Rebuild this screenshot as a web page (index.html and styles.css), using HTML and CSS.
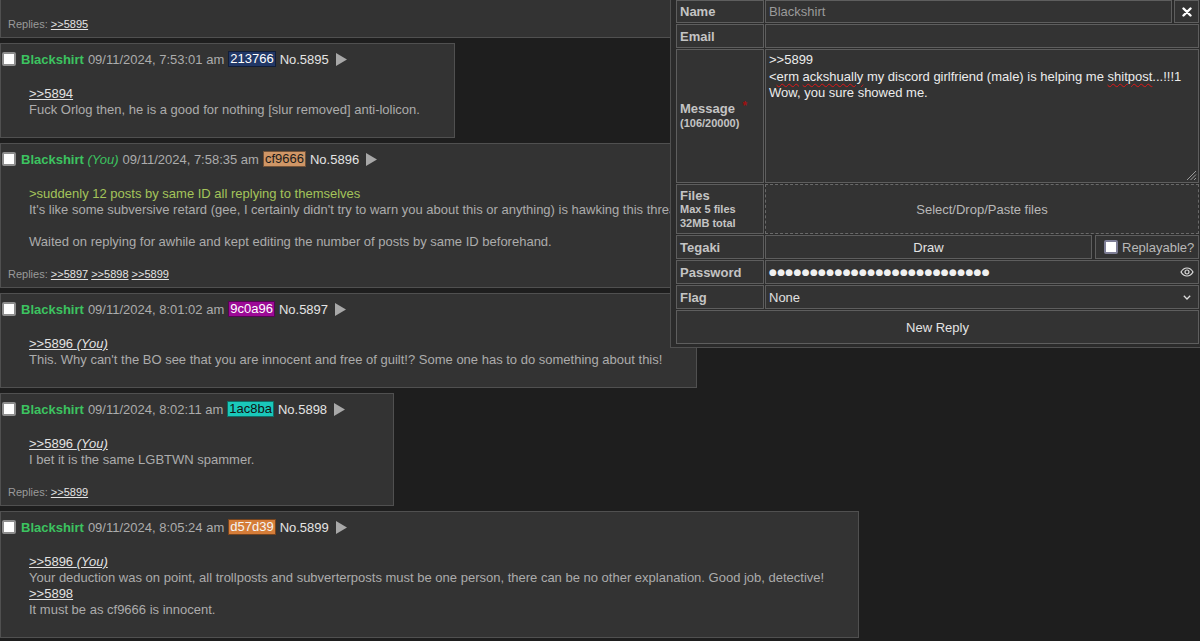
FILE: index.html
```html
<!DOCTYPE html>
<html lang="en">
<head>
<meta charset="utf-8">
<title>Thread</title>
<link rel="stylesheet" href="styles.css">
</head>
<body>
<main class="thread">

  <article class="post post-cut">
    <div class="replies">Replies: <a href="#p5895">&gt;&gt;5895</a></div>
  </article>

  <article class="post" id="p5895">
    <div class="post-head">
      <span class="check"></span>
      <span class="name">Blackshirt</span>
      <span class="date">09/11/2024, 7:53:01 am</span>
      <span class="uid uid-213766">213766</span>
      <span class="no">No.5895</span>
      <svg class="arrow" viewBox="0 0 12 14"><path d="M0 0 L12 7 L0 14 Z"/></svg>
    </div>
    <div class="post-body">
      <p><a class="quote" href="#">&gt;&gt;5894</a></p>
      <p>Fuck Orlog then, he is a good for nothing [slur removed] anti-lolicon.</p>
    </div>
  </article>

  <article class="post">
    <div class="post-head">
      <span class="check"></span>
      <span class="name">Blackshirt <em class="you">(You)</em></span>
      <span class="date">09/11/2024, 7:58:35 am</span>
      <span class="uid uid-cf9666">cf9666</span>
      <span class="no">No.5896</span>
      <svg class="arrow" viewBox="0 0 12 14"><path d="M0 0 L12 7 L0 14 Z"/></svg>
    </div>
    <div class="post-body">
      <p class="green">&gt;suddenly 12 posts by same ID all replying to themselves</p>
      <p>It's like some subversive retard (gee, I certainly didn't try to warn you about this or anything) is hawking this thread.</p>
      <p>&nbsp;</p>
      <p>Waited on replying for awhile and kept editing the number of posts by same ID beforehand.</p>
    </div>
    <div class="replies">Replies: <a href="#">&gt;&gt;5897</a> <a href="#">&gt;&gt;5898</a> <a href="#">&gt;&gt;5899</a></div>
  </article>

  <article class="post">
    <div class="post-head">
      <span class="check"></span>
      <span class="name">Blackshirt</span>
      <span class="date">09/11/2024, 8:01:02 am</span>
      <span class="uid uid-9c0a96">9c0a96</span>
      <span class="no">No.5897</span>
      <svg class="arrow" viewBox="0 0 12 14"><path d="M0 0 L12 7 L0 14 Z"/></svg>
    </div>
    <div class="post-body">
      <p><a class="quote" href="#">&gt;&gt;5896 <em>(You)</em></a></p>
      <p>This. Why can't the BO see that you are innocent and free of guilt!? Some one has to do something about this!</p>
    </div>
  </article>

  <article class="post">
    <div class="post-head">
      <span class="check"></span>
      <span class="name">Blackshirt</span>
      <span class="date">09/11/2024, 8:02:11 am</span>
      <span class="uid uid-1ac8ba">1ac8ba</span>
      <span class="no">No.5898</span>
      <svg class="arrow" viewBox="0 0 12 14"><path d="M0 0 L12 7 L0 14 Z"/></svg>
    </div>
    <div class="post-body">
      <p><a class="quote" href="#">&gt;&gt;5896 <em>(You)</em></a></p>
      <p>I bet it is the same LGBTWN spammer.</p>
    </div>
    <div class="replies">Replies: <a href="#">&gt;&gt;5899</a></div>
  </article>

  <article class="post">
    <div class="post-head">
      <span class="check"></span>
      <span class="name">Blackshirt</span>
      <span class="date">09/11/2024, 8:05:24 am</span>
      <span class="uid uid-d57d39">d57d39</span>
      <span class="no">No.5899</span>
      <svg class="arrow" viewBox="0 0 12 14"><path d="M0 0 L12 7 L0 14 Z"/></svg>
    </div>
    <div class="post-body">
      <p><a class="quote" href="#">&gt;&gt;5896 <em>(You)</em></a></p>
      <p>Your deduction was on point, all trollposts and subverterposts must be one person, there can be no other explanation. Good job, detective!</p>
      <p><a class="quote" href="#">&gt;&gt;5898</a></p>
      <p>It must be as cf9666 is innocent.</p>
    </div>
  </article>

</main>

<form class="reply-form">
  <div class="lbl">Name</div>
  <div class="cell-split">
    <div class="field field-grow muted">Blackshirt</div>
    <div class="field close-btn">
      <svg viewBox="0 0 10 10" width="10" height="10"><path d="M1.5 1.5 L8.5 8.5 M8.5 1.5 L1.5 8.5" stroke="#fff" stroke-width="2.4" stroke-linecap="round"/></svg>
    </div>
  </div>

  <div class="lbl">Email</div>
  <div class="field"></div>

  <div class="lbl lbl-stack">
    <span class="lbl-main">Message <sup class="req">*</sup></span>
    <span class="lbl-small">(106/20000)</span>
  </div>
  <div class="field textarea">
    <p>&gt;&gt;5899</p>
    <p>&lt;<span class="typo">erm</span> <span class="typo">ackshually</span> my discord girlfriend (male) is helping me <span class="typo">shitpost</span>...!!!1</p>
    <p>Wow, you sure showed me.</p>
    <svg class="grip" viewBox="0 0 12 12" width="12" height="12"><path d="M11 2 L2 11 M11 5.5 L5.5 11 M11 9 L9 11" stroke="#9a9a9a" stroke-width="1"/></svg>
  </div>

  <div class="lbl lbl-stack">
    <span class="lbl-main lbl-tight">Files</span>
    <span class="lbl-small">Max 5 files</span>
    <span class="lbl-small">32MB total</span>
  </div>
  <div class="dropzone">Select/Drop/Paste files</div>

  <div class="lbl">Tegaki</div>
  <div class="cell-split cell-split-wide">
    <div class="field field-grow btn">Draw</div>
    <div class="field replay">
      <span class="check check-form"></span>
      <span>Replayable?</span>
    </div>
  </div>

  <div class="lbl">Password</div>
  <div class="field password">
    <span class="dots">●●●●●●●●●●●●●●●●●●●●●●●●●●●</span>
    <svg class="eye" viewBox="0 0 14 10" width="14" height="10"><path d="M1 5 C3 1.5 5 1 7 1 C9 1 11 1.5 13 5 C11 8.5 9 9 7 9 C5 9 3 8.5 1 5 Z" fill="none" stroke="#ddd" stroke-width="1.2"/><circle cx="7" cy="5" r="2" fill="none" stroke="#ddd" stroke-width="1.2"/></svg>
  </div>

  <div class="lbl">Flag</div>
  <div class="field select">
    <span>None</span>
    <svg class="chev" viewBox="0 0 8 5" width="8" height="5"><path d="M0.8 0.8 L4 4 L7.2 0.8" fill="none" stroke="#ddd" stroke-width="1.3"/></svg>
  </div>

  <div class="field btn submit">New Reply</div>
</form>
</body>
</html>
```
FILE: styles.css
```css
html, body {
  margin: 0;
  padding: 0;
  background: #1e1e1e;
  font-family: "Liberation Sans", Arial, sans-serif;
  font-size: 13px;
  color: #acacac;
  overflow: hidden;
  height: 641px;
}

p { margin: 0; }
a { color: #dcdcdc; }

.thread {
  display: flex;
  flex-direction: column;
  align-items: flex-start;
  gap: 5px;
}

.post {
  background: #333;
  border: 1px solid #505050;
  padding-bottom: 2px;
  white-space: nowrap;
}

.post-cut {
  border-top: 0;
  padding-top: 17px;
  min-width: 720px;
  box-sizing: border-box;
}

.post-head {
  display: flex;
  align-items: center;
  gap: 4px;
  height: 20px;
  margin-top: 5px;
  padding-right: 48px;
}

.check {
  display: inline-block;
  width: 14px;
  height: 14px;
  box-sizing: border-box;
  border: 2px solid #8d8d8d;
  border-radius: 2px;
  background: #fff;
  margin-left: 1px;
  margin-right: 1px;
}

.name {
  color: #3cc360;
  font-weight: bold;
}

.you {
  font-weight: normal;
  font-style: italic;
}

.date { color: #acacac; }

.uid {
  display: inline-block;
  line-height: 14px;
  padding: 0 1px;
  border: 1px solid rgba(0, 0, 0, 0.45);
  color: #fff;
}
.uid-213766 { background: #213766; }
.uid-cf9666 { background: #cf9666; color: #1a1a1a; }
.uid-9c0a96 { background: #9c0a96; }
.uid-1ac8ba { background: #1ac8ba; color: #111; }
.uid-d57d39 { background: #d57d39; color: #f4f4f4; }

.no { color: #e4e4e4; }

.arrow {
  width: 11px;
  height: 13px;
  fill: #a8a8a8;
  margin-left: 3px;
}

.post-body {
  margin: 17px 34px 17px 28px;
  line-height: 16px;
}

.quote { color: #e2e2e2; }
.quote em { font-style: italic; }

.green { color: #a4c45a; }

.replies {
  font-size: 11px;
  line-height: 14px;
  padding: 0 0 4px 7px;
  color: #9a9a9a;
}
.replies a { color: #e4e4e4; }

/* reply form */
.reply-form {
  position: fixed;
  top: 0;
  right: 0;
  width: 530px;
  box-sizing: border-box;
  margin: 0;
  background: #2b2b2b;
  border-left: 1px solid #505050;
  border-bottom: 1px solid #505050;
  padding: 0 1px 3px 5px;
  display: grid;
  grid-template-columns: 88px 1fr;
  grid-template-rows: 23px 24px 134px 50px 24px 24px 24px 34px;
  column-gap: 1px;
  row-gap: 1px;
}

.lbl {
  background: #333;
  border: 1px solid #5e5e5e;
  color: #c4c4c4;
  font-weight: bold;
  padding-left: 3px;
  display: flex;
  align-items: center;
}

.lbl-stack {
  flex-direction: column;
  align-items: flex-start;
  justify-content: center;
}
.lbl-main { line-height: 16px; }
.lbl-tight { line-height: 15px; }
.lbl-small {
  font-size: 11px;
  line-height: 13.5px;
}

.req {
  color: #a01010;
  font-size: 12px;
  margin-left: 4px;
  vertical-align: 3px;
  line-height: 0;
}

.field {
  background: #333;
  border: 1px solid #5e5e5e;
  color: #e0e0e0;
  padding: 0 3px;
  display: flex;
  align-items: center;
  min-width: 0;
}

.muted { color: #9a9a9a; }

.cell-split {
  display: flex;
  gap: 2px;
  min-width: 0;
}
.cell-split-wide { gap: 3px; }

.field-grow { flex: 1; }

.close-btn {
  width: 25px;
  box-sizing: border-box;
  justify-content: center;
  padding: 0;
}

.textarea {
  display: block;
  position: relative;
  padding: 2px 3px;
  line-height: 16.5px;
  color: #ececec;
}

.typo {
  text-decoration: underline wavy #e01818;
  text-decoration-thickness: 1px;
  text-underline-offset: 2px;
}

.grip {
  position: absolute;
  right: 1px;
  bottom: 1px;
}

.dropzone {
  border: 1px dashed #6a6a6a;
  background: #333;
  color: #b8b8b8;
  display: flex;
  align-items: center;
  justify-content: center;
}

.btn {
  justify-content: center;
  color: #e4e4e4;
}

.replay {
  width: 104px;
  box-sizing: border-box;
  padding: 0 0 0 8px;
  gap: 4px;
  color: #b8b8b8;
}
.check-form {
  border-color: #7e7e96;
  margin: 0;
}

.password {
  justify-content: space-between;
  padding-right: 4px;
}
.dots {
  font-family: "DejaVu Sans", sans-serif;
  font-size: 9px;
  letter-spacing: 0.33px;
  color: #f0f0f0;
}

.select {
  justify-content: space-between;
  padding-right: 7px;
}

.submit {
  grid-column: 1 / 3;
}
```
